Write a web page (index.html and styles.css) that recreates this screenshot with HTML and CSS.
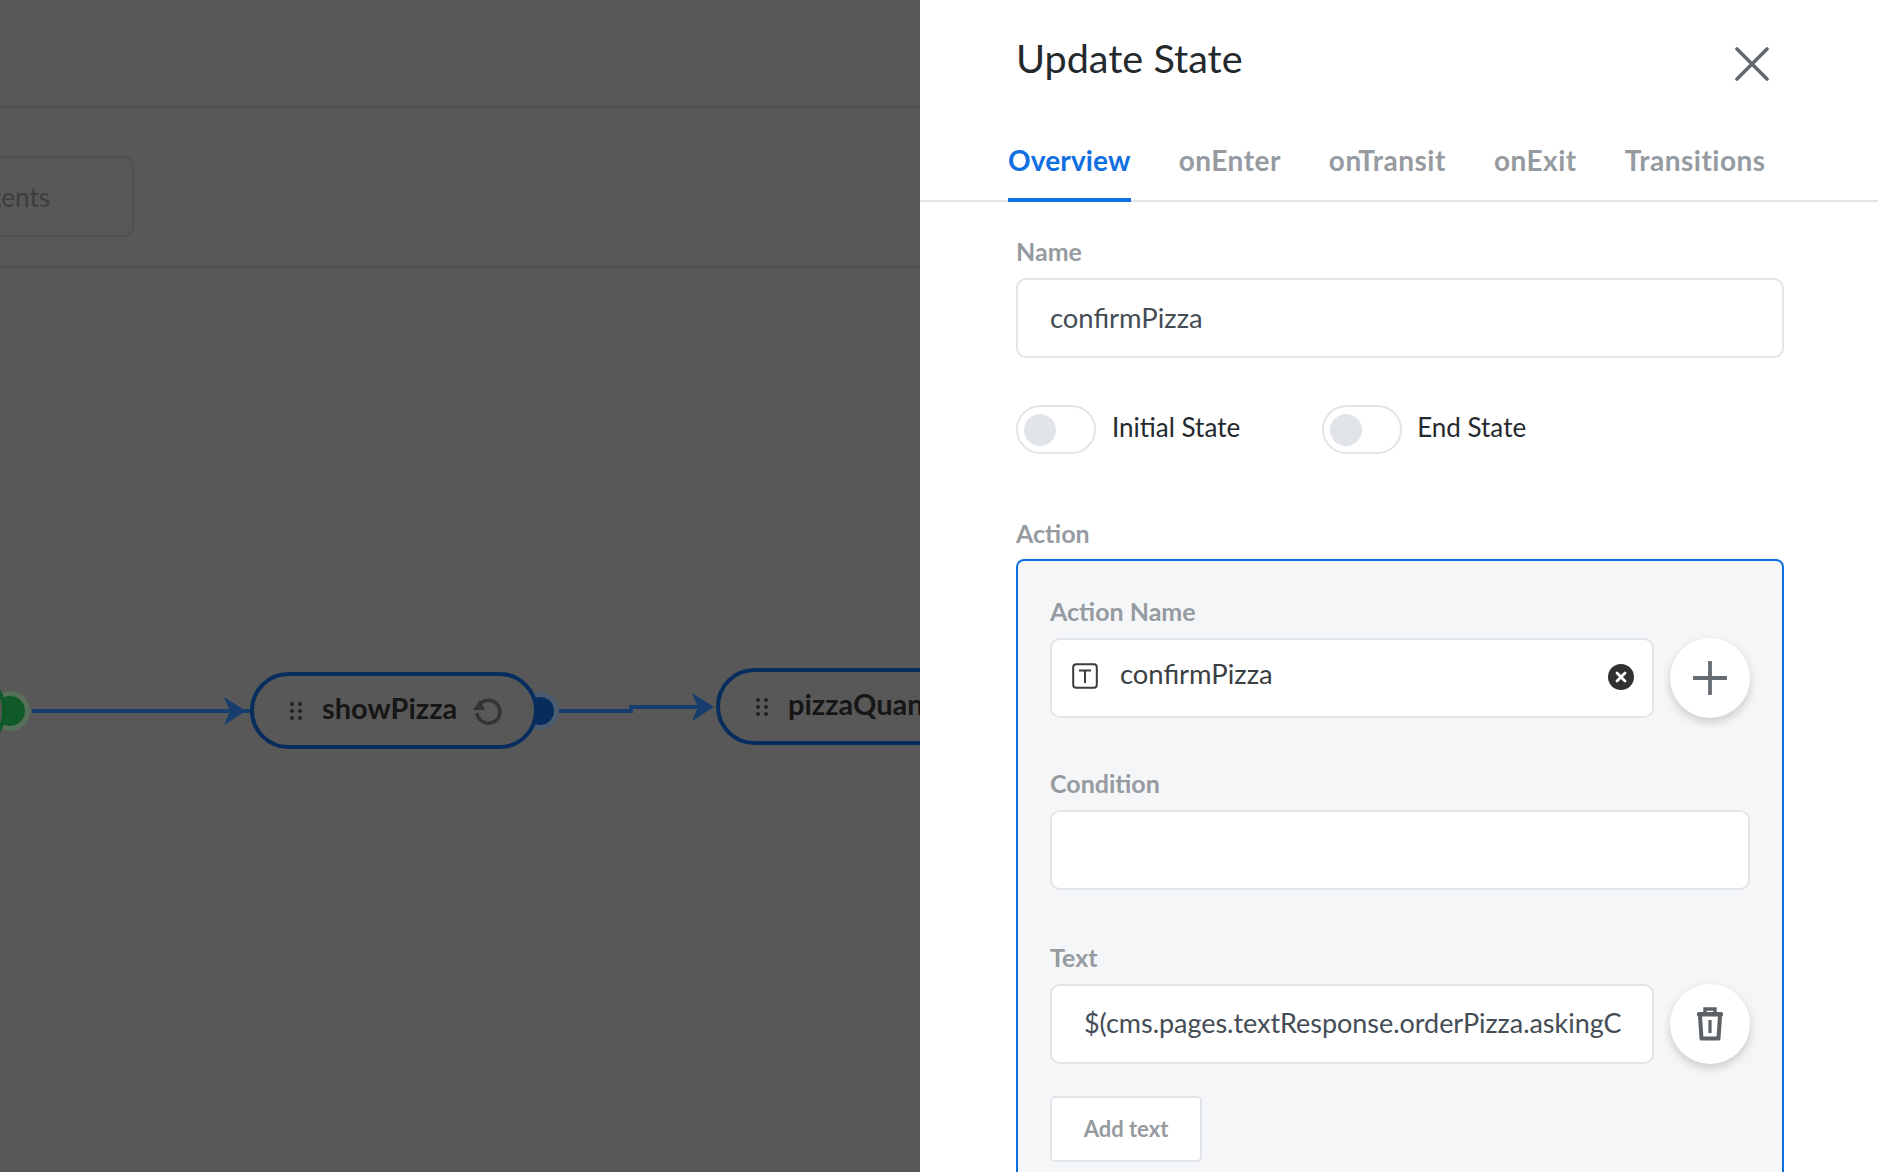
FILE: index.html
```html
<!DOCTYPE html>
<html lang="en">
<head>
	<meta charset="UTF-8">
	<title>Update State</title>
	<link rel="stylesheet" href="styles.css">
</head>
<body>
	<div id="container">
		<div id="canvas-area">
			<div class="top-bar"></div>
			<div class="tool-bar">
				<div class="tool-btn">Contents</div>
			</div>
			<div class="flow">
				<svg class="edges" width="920" height="905" viewBox="0 0 920 905">
					<path d="M32 443H631V439H708" fill="none" stroke="#163d6c" stroke-width="4"/>
					<path d="M224 429L246 443L224 457L230 443Z" fill="#163d6c"/>
					<path d="M692 425L714 439L692 453L698 439Z" fill="#163d6c"/>
					<circle cx="10" cy="443" r="20" fill="#56705a"/>
					<circle cx="10" cy="443" r="15" fill="#0f5a28"/>
					<circle cx="-37" cy="443" r="41" fill="#585858" stroke="#0f5a28" stroke-width="4"/>
					<circle cx="540" cy="443" r="19" fill="#4b5c70"/>
					<circle cx="540" cy="443" r="14" fill="#072d5e"/>
				</svg>
				<div class="node node-show">
					<svg class="dots" width="14" height="20" viewBox="0 0 14 20"><g fill="#222"><circle cx="3" cy="3" r="2"/><circle cx="11" cy="3" r="2"/><circle cx="3" cy="10" r="2"/><circle cx="11" cy="10" r="2"/><circle cx="3" cy="17" r="2"/><circle cx="11" cy="17" r="2"/></g></svg>
					<span>showPizza</span>
					<svg class="retry" width="30" height="30" viewBox="0 0 30 30"><path d="M8 7A11.5 11.5 0 1 1 4 17" fill="none" stroke="#333" stroke-width="3.4"/><path d="M0 14L7 4L12 14Z" fill="#333"/></svg>
				</div>
				<div class="node node-pizza">
					<svg class="dots" width="14" height="20" viewBox="0 0 14 20"><g fill="#222"><circle cx="3" cy="3" r="2"/><circle cx="11" cy="3" r="2"/><circle cx="3" cy="10" r="2"/><circle cx="11" cy="10" r="2"/><circle cx="3" cy="17" r="2"/><circle cx="11" cy="17" r="2"/></g></svg>
					<span>pizzaQuantity</span>
				</div>
			</div>
		</div>
		<div id="panel">
			<div class="panel-head">
				<h1 class="panel-title">Update State</h1>
				<svg class="close-icon" width="34" height="34" viewBox="0 0 34 34"><path d="M2 2L32 32M32 2L2 32" stroke="#63686c" stroke-width="3.6" stroke-linecap="round"/></svg>
			</div>
			<div class="tabs">
				<div class="tab active">Overview</div>
				<div class="tab">onEnter</div>
				<div class="tab">onTransit</div>
				<div class="tab">onExit</div>
				<div class="tab">Transitions</div>
			</div>
			<div class="panel-body">
				<label class="field-label name-label">Name</label>
				<div class="input input-text">confirmPizza</div>
				<div class="toggle-row">
					<div class="toggle-item">
						<div class="toggle"><div class="knob"></div></div>
						<span>Initial State</span>
					</div>
					<div class="toggle-item">
						<div class="toggle"><div class="knob"></div></div>
						<span>End State</span>
					</div>
				</div>
				<label class="field-label action-label">Action</label>
				<div class="action-box">
					<label class="field-label">Action Name</label>
					<div class="input-row">
						<div class="input action-input">
							<svg class="t-icon" width="26" height="26" viewBox="0 0 26 26"><rect x="1.2" y="1.2" width="23.6" height="23.6" rx="3" fill="none" stroke="#3a3d40" stroke-width="2"/><path d="M7 7.5H19M13 7.5V20" fill="none" stroke="#3a3d40" stroke-width="2"/></svg>
							<span class="action-name">confirmPizza</span>
							<svg class="clear-icon" width="26" height="26" viewBox="0 0 26 26"><circle cx="13" cy="13" r="13" fill="#2f3133"/><path d="M9 9L17 17M17 9L9 17" stroke="#fff" stroke-width="2.8" stroke-linecap="round"/></svg>
						</div>
						<div class="round-btn">
							<svg width="34" height="34" viewBox="0 0 34 34"><path d="M17 1V33M1 17H33" stroke="#676c70" stroke-width="3.8" stroke-linecap="round"/></svg>
						</div>
					</div>
					<label class="field-label condition-label">Condition</label>
					<div class="input"></div>
					<label class="field-label text-label">Text</label>
					<div class="input-row">
						<div class="input input-text text-value">$(cms.pages.textResponse.orderPizza.askingC</div>
						<div class="round-btn">
							<svg width="28" height="34" viewBox="0 0 28 34"><path d="M9 5V2H19V5" fill="none" stroke="#5d6266" stroke-width="3.4"/><rect x="1" y="5" width="26" height="4.5" rx="1.5" fill="#5d6266"/><path d="M4 9L5.5 31.5H22.5L24 9" fill="none" stroke="#5d6266" stroke-width="4" stroke-linejoin="round"/><path d="M14 13V26" stroke="#5d6266" stroke-width="3.2"/></svg>
						</div>
					</div>
					<div class="add-btn">Add text</div>
				</div>
			</div>
		</div>
	</div>
</body>
</html>
```

FILE: styles.css
```css
html, body {
	margin: 0;
	height: 100%;
	overflow: hidden;
}
body {
	font-family: "Lato", "Open Sans", sans-serif;
	color: #24292e;
}
#container {
	display: flex;
	width: 1878px;
	height: 1172px;
	overflow: hidden;
}
#canvas-area {
	width: 920px;
	flex-shrink: 0;
	background-color: #585858;
	overflow: hidden;
}
.top-bar {
	height: 106px;
	border-bottom: 2px solid #505050;
}
.tool-bar {
	height: 158px;
	border-bottom: 2px solid #505050;
	display: flex;
	align-items: flex-start;
}
.tool-btn {
	width: 134px;
	height: 81px;
	margin-top: 48px;
	box-sizing: border-box;
	display: flex;
	align-items: center;
	justify-content: flex-end;
	padding-right: 82px;
	border: 2px solid #505050;
	border-left: none;
	border-radius: 0 10px 10px 0;
	color: #3d3d3d;
	font-size: 26px;
	white-space: nowrap;
	overflow: hidden;
}
.flow {
	position: relative;
	height: 905px;
}
.edges {
	position: absolute;
	left: 0;
	top: 0;
}
.node {
	position: absolute;
	box-sizing: border-box;
	height: 77px;
	display: flex;
	align-items: center;
	border: 4px solid #072d5e;
	border-radius: 39px;
	background-color: #585858;
	font-size: 29px;
	font-weight: 700;
	color: #161616;
	white-space: nowrap;
}
.node span {
	margin-top: -6px;
}
.node-show {
	left: 250px;
	top: 404px;
	width: 288px;
	padding-left: 35px;
}
.node-pizza {
	left: 716px;
	top: 400px;
	width: 300px;
	padding-left: 35px;
}
.dots {
	margin-right: 19px;
	flex-shrink: 0;
}
.retry {
	margin-left: 16px;
}
#panel {
	width: 958px;
	flex-shrink: 0;
	background-color: #fff;
}
.panel-head {
	height: 122px;
	position: relative;
}
.panel-title {
	margin: 0;
	padding: 35px 0 0 96px;
	font-size: 39.6px;
	line-height: 46px;
	font-weight: 400;
}
.close-icon {
	position: absolute;
	left: 815px;
	top: 47px;
}
.tabs {
	display: flex;
	gap: 48px;
	height: 80px;
	padding-left: 88px;
	box-sizing: border-box;
	border-bottom: 2px solid #e1e4e8;
}
.tab {
	height: 80px;
	box-sizing: border-box;
	padding-top: 18px;
	line-height: 40px;
	font-size: 28px;
	font-weight: 700;
	letter-spacing: 0.5px;
	color: #959ba0;
}
.tab.active {
	color: #0f6fe0;
	letter-spacing: 0.15px;
	border-bottom: 4px solid #0f6fe0;
}
.panel-body {
	padding: 0 94px 0 96px;
}
.field-label {
	display: block;
	font-size: 25px;
	line-height: 30px;
	font-weight: 700;
	color: #959ba0;
	margin-top: -1px;
	margin-bottom: 12px;
}
.name-label {
	padding-top: 35px;
}
.input {
	height: 80px;
	box-sizing: border-box;
	border: 2px solid #e1e4e8;
	border-radius: 10px;
	background-color: #fff;
}
.input-text {
	display: flex;
	align-items: center;
	padding-left: 32px;
	padding-bottom: 1px;
	font-size: 27.4px;
	color: #444d56;
	white-space: nowrap;
	overflow: hidden;
}
.text-value {
	font-size: 27px;
	letter-spacing: -0.04px;
	padding-bottom: 3px;
}
.toggle-row {
	display: flex;
	gap: 82px;
	margin-top: 47px;
}
.toggle-item {
	display: flex;
	align-items: center;
	gap: 16px;
	font-size: 26px;
	line-height: 40px;
}
.toggle-item span {
	margin-top: -6px;
}
.toggle-item + .toggle-item {
	gap: 15px;
}
.toggle {
	width: 80px;
	height: 49px;
	box-sizing: border-box;
	border: 2px solid #e1e4e8;
	border-radius: 25px;
	display: flex;
	align-items: center;
	padding-left: 6px;
}
.knob {
	width: 32px;
	height: 32px;
	border-radius: 50%;
	background-color: #e1e4e8;
}
.action-label {
	margin-top: 64px;
	margin-bottom: 11px;
}
.action-box {
	box-sizing: border-box;
	height: 620px;
	padding: 36px 32px 0 32px;
	border: 2px solid #0f6fe0;
	border-radius: 8px;
	background-color: #f5f6f8;
}
.input-row {
	display: flex;
	gap: 16px;
}
.input-row .input {
	flex: 1;
	min-width: 0;
}
.action-input {
	display: flex;
	align-items: center;
	padding: 0 18px 0 20px;
}
.t-icon {
	flex-shrink: 0;
	margin-top: -4px;
}
.action-name {
	flex: 1;
	margin-left: 22px;
	margin-top: -9px;
	font-size: 27.4px;
	color: #3a3f44;
}
.clear-icon {
	flex-shrink: 0;
	margin-top: -2px;
}
.round-btn {
	width: 80px;
	height: 80px;
	flex-shrink: 0;
	border-radius: 50%;
	background-color: #fff;
	box-shadow: 0 4px 10px rgba(0, 0, 0, 0.18);
	display: flex;
	align-items: center;
	justify-content: center;
}
.condition-label {
	margin-top: 50px;
	margin-bottom: 12px;
}
.text-label {
	margin-top: 52px;
	margin-bottom: 12px;
}
.add-btn {
	width: 152px;
	height: 66px;
	box-sizing: border-box;
	margin-top: 32px;
	padding-bottom: 2px;
	border: 2px solid #e1e4e8;
	border-radius: 5px;
	background-color: #fff;
	display: flex;
	align-items: center;
	justify-content: center;
	font-size: 22px;
	font-weight: 700;
	color: #959ba0;
}
```
